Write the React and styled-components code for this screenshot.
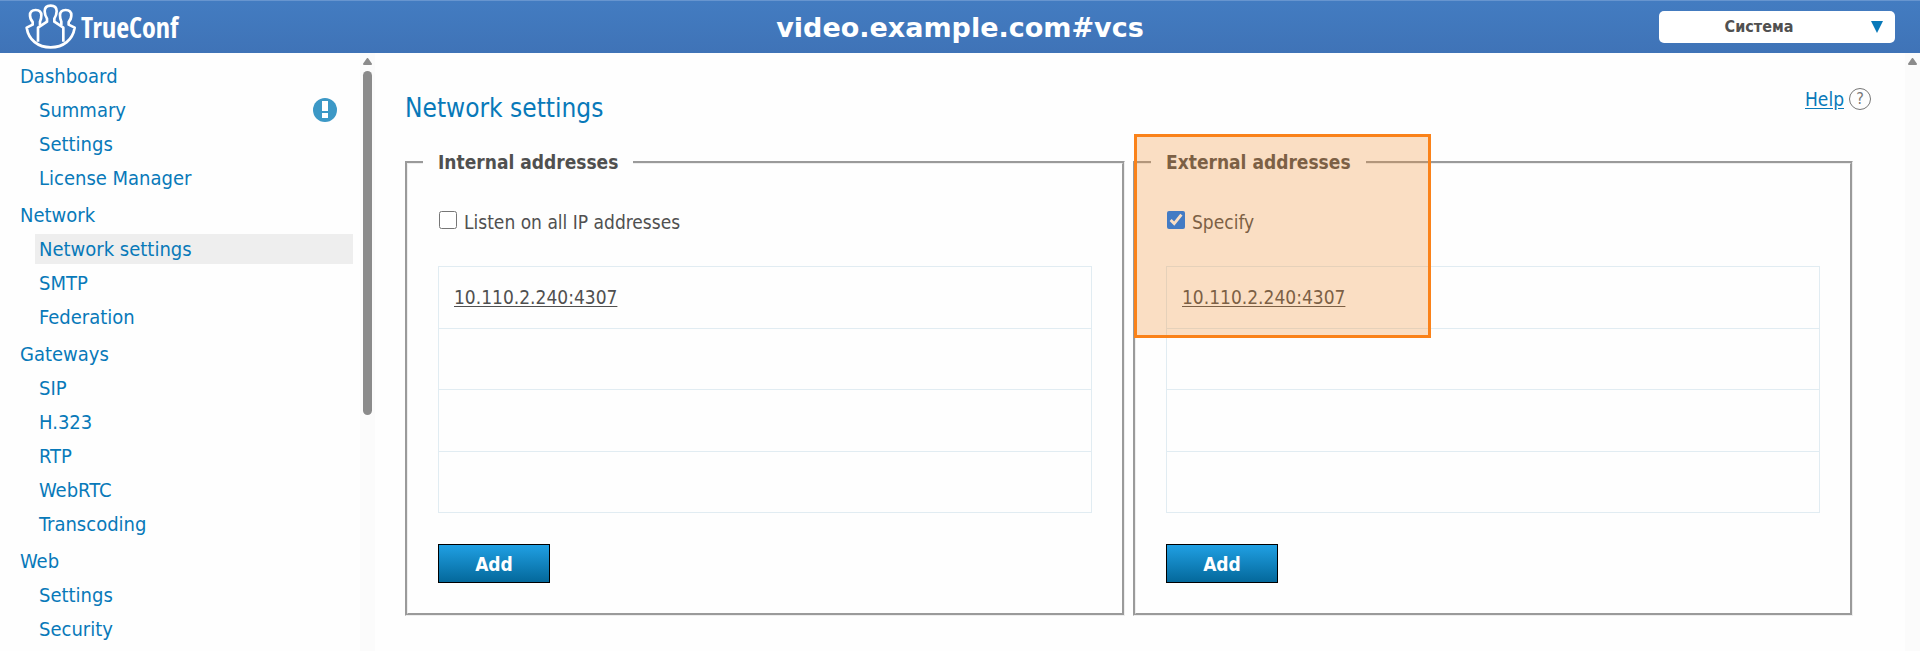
import React from 'react';
import styled, { createGlobalStyle } from 'styled-components';

const GlobalStyle = createGlobalStyle`
  *, *::before, *::after { box-sizing: border-box; }
  html, body, #root { height: 100%; }
  body {
    margin: 0;
    overflow: hidden;
    background: #fefefe;
    color: #505050;
    font-family: "DejaVu Sans Condensed", Tahoma, "DejaVu Sans", sans-serif;
    font-size: 19px;
    line-height: 24px;
  }
  button, select, input { font: inherit; color: inherit; }
`;

const Page = styled.div`
  display: flex;
  flex-direction: column;
  height: 100%;
`;

const Header = styled.header`
  display: grid;
  grid-template-columns: 1fr auto 1fr;
  align-items: center;
  flex: none;
  height: 53px;
  padding: 0 25px;
  border-top: 1px solid #6795cf;
  background: linear-gradient(#437cc1, #3f73b7);
  color: #fff;
`;

const Brand = styled.a`
  display: flex;
  align-items: center;
  gap: 4px;
  color: #fff;
  text-decoration: none;
`;

const BrandMark = styled.svg`
  display: block;
  width: 52px;
  height: 48px;
`;

const BrandName = styled.span`
  font-family: "Open Sans Condensed", "Roboto Condensed", "Noto Sans Condensed", "DejaVu Sans Condensed", sans-serif;
  font-size: 28px;
  font-weight: 700;
  line-height: 44px;
`;

const ServerName = styled.h1`
  margin: 0;
  padding-top: 2px;
  font-family: "DejaVu Sans", Verdana, sans-serif;
  font-size: 27px;
  font-weight: 700;
  line-height: 40px;
`;

const SelectBox = styled.div`
  position: relative;
  justify-self: end;
  width: 236px;
  height: 32px;
`;

const Select = styled.select`
  appearance: none;
  width: 100%;
  height: 100%;
  padding: 0 36px 0 0;
  border: 0;
  border-radius: 5px;
  background: #fff;
  color: #505050;
  font-size: 16px;
  font-weight: 700;
  text-align: center;
  text-align-last: center;
`;

const SelectArrow = styled.svg`
  position: absolute;
  top: 10px;
  right: 12px;
  width: 12px;
  height: 12px;
  pointer-events: none;
`;

const Body = styled.div`
  display: flex;
  flex: 1;
  min-height: 0;
`;

const Sidebar = styled.nav`
  display: flex;
  flex: none;
  width: 375px;
`;

const Menu = styled.ul`
  flex: 1;
  margin: 0;
  padding: 6px 7px 0 20px;
  overflow: hidden;
  font-size: 20px;
  list-style: none;
`;

const MenuGroup = styled.li`
  margin-bottom: 3px;
`;

const SubMenu = styled.ul`
  margin: 0;
  padding: 0 0 0 15px;
  list-style: none;
`;

const MenuRow = styled.div`
  display: flex;
  align-items: center;
  height: 34px;
`;

const MenuLink = styled.a`
  display: flex;
  flex: 1;
  align-items: center;
  justify-content: space-between;
  height: 30px;
  padding: ${(p) => (p.$nested ? '0 16px 0 4px' : '0')};
  background: ${(p) => (p.$active ? '#eee' : 'transparent')};
  color: #0879b9;
  text-decoration: none;
`;

const Notice = styled.svg`
  width: 24px;
  height: 24px;
`;

const Track = styled.div`
  display: flex;
  flex: none;
  flex-direction: column;
  align-items: center;
  gap: 6px;
  width: 15px;
  padding-top: 5px;
  background: #fbfbfb;
`;

const Thumb = styled.div`
  width: 9px;
  height: 344px;
  border-radius: 5px;
  background: #8b8b8b;
`;

const Main = styled.main`
  flex: 1;
  min-width: 0;
  padding: 31px 52px 0 30px;
  overflow: hidden;
`;

const TitleRow = styled.div`
  display: flex;
  justify-content: space-between;
  margin-right: -18px;
  margin-bottom: 27px;
`;

const Title = styled.h2`
  margin: 0;
  padding-top: 9px;
  color: #0879b9;
  font-size: 26px;
  font-weight: 400;
  line-height: 30px;
`;

const HelpLink = styled.a`
  display: flex;
  align-items: center;
  gap: 5px;
  height: 30px;
  color: #0879b9;
  text-decoration: none;
`;

const HelpText = styled.span`
  text-decoration: underline;
  text-underline-offset: 2px;
`;

const HelpMark = styled.span`
  display: flex;
  align-items: center;
  justify-content: center;
  width: 22px;
  height: 22px;
  border: 1px solid #777;
  border-radius: 50%;
  color: #777;
  font-size: 16px;
`;

const Panels = styled.div`
  display: flex;
  gap: 8px;
`;

const Panel = styled.div`
  position: relative;
  flex: 1;
  min-width: 0;
`;

const Fieldset = styled.fieldset`
  min-width: 0;
  margin: 0;
  padding: 36px 30px 30px;
  border: 3px groove #eee;
`;

const Legend = styled.legend`
  margin-left: -15px;
  padding: 0 15px;
  font-weight: 700;
`;

const CheckLabel = styled.label`
  display: flex;
  align-items: center;
  gap: 7px;
  margin-bottom: 32px;
`;

const Checkbox = styled.input`
  width: 18px;
  height: 18px;
  margin: 0 0 4px 1px;
`;

const AddressTable = styled.table`
  width: 100%;
  height: 247px;
  margin-bottom: 31px;
  border-collapse: collapse;
`;

const AddressCell = styled.td`
  height: 61px;
  padding: 0 15px;
  border: 1px solid #e1ecf2;
`;

const AddressLink = styled.a`
  color: inherit;
  text-underline-offset: 2px;
`;

const AddButton = styled.button`
  display: block;
  width: 112px;
  height: 39px;
  padding: 0;
  border: 1px solid #000;
  background: linear-gradient(#20a0e3, #04689b);
  color: #fff;
  font-weight: 700;
`;

const Highlight = styled.div`
  position: absolute;
  top: -16px;
  left: 1px;
  width: 297px;
  height: 204px;
  border: 3px solid #fa8219;
  background: rgba(241, 140, 44, 0.28);
  pointer-events: none;
`;

const menu = [
  {
    title: 'Dashboard',
    items: [{ label: 'Summary', notice: true }, { label: 'Settings' }, { label: 'License Manager' }],
  },
  {
    title: 'Network',
    items: [{ label: 'Network settings', active: true }, { label: 'SMTP' }, { label: 'Federation' }],
  },
  {
    title: 'Gateways',
    items: [
      { label: 'SIP' },
      { label: 'H.323' },
      { label: 'RTP' },
      { label: 'WebRTC' },
      { label: 'Transcoding' },
    ],
  },
  { title: 'Web', items: [{ label: 'Settings' }, { label: 'Security' }] },
];

function Logo() {
  return (
    <BrandMark viewBox="75 9 156 144" fill="none" stroke="#fff" strokeWidth="8" strokeLinejoin="round" aria-hidden="true">
      <path d="M114 125V83L141 65V56C136 48 134 40 134 34C134 22 142 17 152 17S170 22 170 34C170 40 168 48 163 56V65L190 83V125" />
      <path d="M120 76V65C124 58 124 50 124 46C124 35 117 30 107 30S90 35 90 46C90 53 92 60 98 66V74L80 83C86 120 114 142 152 142S218 120 224 83L206 74V66C212 60 214 53 214 46C214 35 207 30 197 30S180 35 180 46C180 50 180 58 184 65V76" />
    </BrandMark>
  );
}

function ScrollArrow() {
  return (
    <svg width="9" height="7" viewBox="0 0 9 7" aria-hidden="true">
      <path d="M4.500 1L8 6H1Z" fill="#8b8b8b" stroke="#8b8b8b" strokeWidth="2" strokeLinejoin="round" />
    </svg>
  );
}

function AddressPanel({ title, option, checked, addresses, highlighted }) {
  const rows = [...addresses, ...Array(4 - addresses.length).fill(null)];
  return (
    <Panel>
      <Fieldset>
        <Legend>{title}</Legend>
        <CheckLabel>
          <Checkbox type="checkbox" defaultChecked={checked} />
          {option}
        </CheckLabel>
        <AddressTable>
          <tbody>
            {rows.map((address, i) => (
              <tr key={i}>
                <AddressCell>{address && <AddressLink href="#address">{address}</AddressLink>}</AddressCell>
              </tr>
            ))}
          </tbody>
        </AddressTable>
        <AddButton type="button">Add</AddButton>
      </Fieldset>
      {highlighted && <Highlight />}
    </Panel>
  );
}

export default function App() {
  return (
    <>
      <GlobalStyle />
      <Page>
        <Header>
          <Brand href="#home">
            <Logo />
            <BrandName>TrueConf</BrandName>
          </Brand>
          <ServerName>video.example.com#vcs</ServerName>
          <SelectBox>
            <Select aria-label="Account" defaultValue="system">
              <option value="system">Система</option>
            </Select>
            <SelectArrow viewBox="0 0 12 12" aria-hidden="true">
              <path d="M0 0H12L6 12Z" fill="#0879b9" />
            </SelectArrow>
          </SelectBox>
        </Header>
        <Body>
          <Sidebar aria-label="Sections">
            <Menu>
              {menu.map((group) => (
                <MenuGroup key={group.title}>
                  <MenuRow>
                    <MenuLink href="#section">{group.title}</MenuLink>
                  </MenuRow>
                  <SubMenu>
                    {group.items.map((item) => (
                      <li key={item.label}>
                        <MenuRow>
                          <MenuLink href="#page" $nested $active={item.active}>
                            {item.label}
                            {item.notice && (
                              <Notice viewBox="0 0 24 24" aria-hidden="true">
                                <circle cx="12" cy="12" r="12" fill="#3c98c6" />
                                <path d="M9 3H15V13H9ZM9 15H15V20H9Z" fill="#fff" />
                              </Notice>
                            )}
                          </MenuLink>
                        </MenuRow>
                      </li>
                    ))}
                  </SubMenu>
                </MenuGroup>
              ))}
            </Menu>
            <Track>
              <ScrollArrow />
              <Thumb />
            </Track>
          </Sidebar>
          <Main>
            <TitleRow>
              <Title>Network settings</Title>
              <HelpLink href="#help">
                <HelpText>Help</HelpText>
                <HelpMark>?</HelpMark>
              </HelpLink>
            </TitleRow>
            <Panels>
              <AddressPanel
                title="Internal addresses"
                option="Listen on all IP addresses"
                addresses={['10.110.2.240:4307']}
              />
              <AddressPanel
                title="External addresses"
                option="Specify"
                checked
                addresses={['10.110.2.240:4307']}
                highlighted
              />
            </Panels>
          </Main>
          <Track>
            <ScrollArrow />
          </Track>
        </Body>
      </Page>
    </>
  );
}
